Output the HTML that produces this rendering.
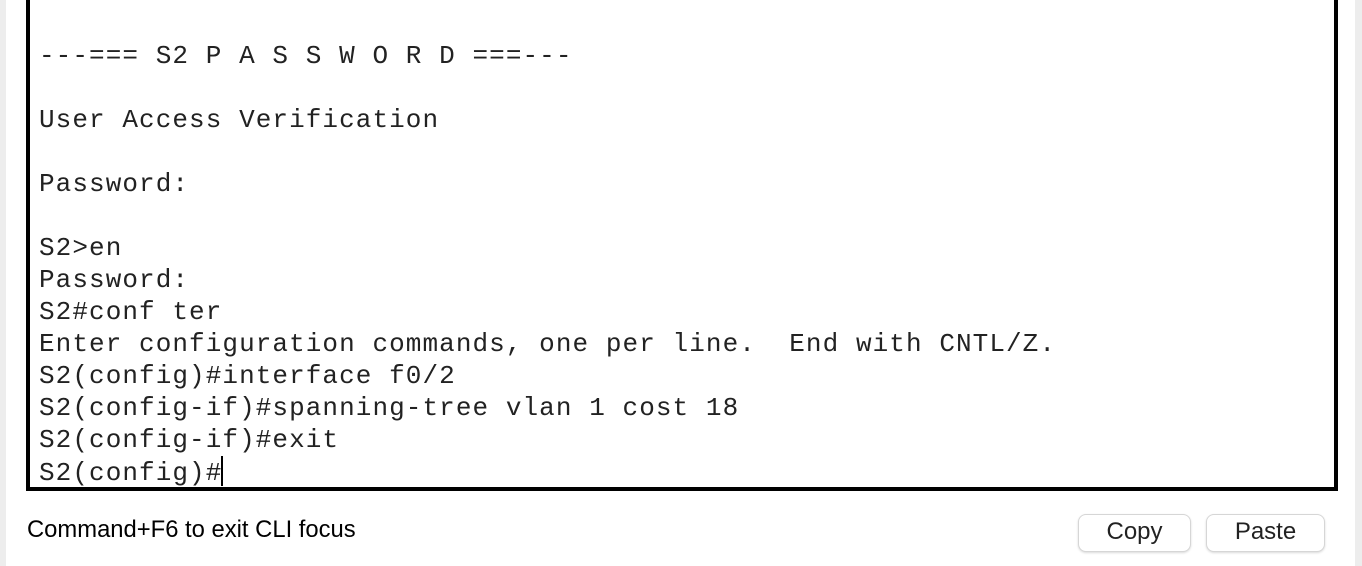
<!DOCTYPE html>
<html><head><style>
body{margin:0;width:1362px;height:566px;background:#fff;position:relative;overflow:hidden;font-family:"Liberation Sans",sans-serif}
.ls{position:absolute;left:0;top:0;width:6px;height:566px;background:#ededed}
.rs{position:absolute;left:1355px;top:0;width:7px;height:566px;background:#ededed}
.term{position:absolute;left:26px;top:-10px;width:1304px;height:497px;border:4px solid #000;border-top:none;background:#fff}
pre{position:absolute;left:39px;top:40px;margin:0;font-family:"Liberation Mono",monospace;font-size:26px;letter-spacing:1.07px;line-height:32px;color:#222}
.cur{display:inline-block;width:2px;height:30px;background:#000;vertical-align:-6px;margin-left:-1px}
.cmd{position:absolute;left:27px;top:516px;font-size:23.8px;color:#000}
.btn{position:absolute;top:514px;height:38px;border:1px solid #d6d6d6;border-radius:8px;background:#fff;box-shadow:0 1px 2px rgba(0,0,0,.15);font-size:24px;color:#222;text-align:center;line-height:33px;box-sizing:border-box}
</style></head><body>
<div class="ls"></div><div class="rs"></div>
<div class="term"></div>
<pre>---=== S2 P A S S W O R D ===---

User Access Verification

Password:

S2&gt;en
Password:
S2#conf ter
Enter configuration commands, one per line.  End with CNTL/Z.
S2(config)#interface f0/2
S2(config-if)#spanning-tree vlan 1 cost 18
S2(config-if)#exit
S2(config)#<span class="cur"></span></pre>
<div class="cmd">Command+F6 to exit CLI focus</div>
<div class="btn" style="left:1078px;width:113px">Copy</div>
<div class="btn" style="left:1206px;width:119px">Paste</div>
</body></html>
